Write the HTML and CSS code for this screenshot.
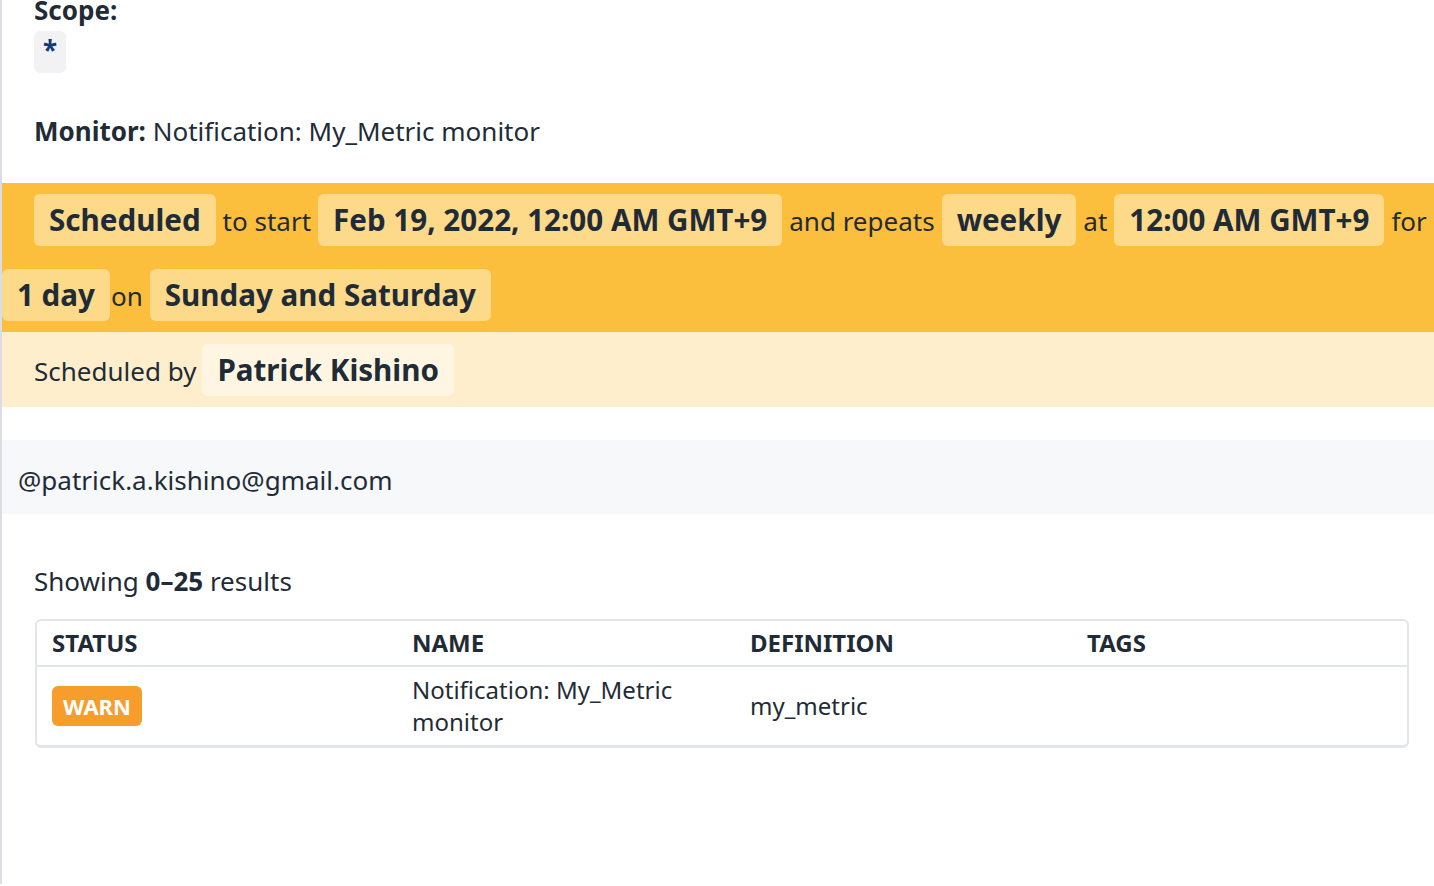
FILE: index.html
```html
<!DOCTYPE html>
<html lang="en">
<head>
    <meta charset="UTF-8">
    <title>Downtime details</title>
    <link rel="stylesheet" href="styles.css">
</head>
<body>

    <div class="page">
        <div class="details">
            <div class="field-label">Scope:</div>
            <div class="scope-chip">*</div>
            <p class="monitor"><strong>Monitor:</strong> Notification: My_Metric monitor</p>
        </div>

        <div class="schedule">
            <span class="chip first">Scheduled</span>
            <span class="word">to start</span>
            <span class="chip">Feb 19, 2022, 12:00 AM GMT+9</span>
            <span class="word">and repeats</span>
            <span class="chip">weekly</span>
            <span class="word">at</span>
            <span class="chip">12:00 AM GMT+9</span>
            <span class="word">for</span>
            <span class="chip">1 day</span>
            <span class="word tight">on</span>
            <span class="chip">Sunday and Saturday</span>
        </div>

        <div class="scheduled-by">
            <span class="word">Scheduled by</span>
            <span class="chip light">Patrick Kishino</span>
        </div>

        <div class="message">@patrick.a.kishino@gmail.com</div>

        <div class="results">Showing <strong>0–25</strong> results</div>

        <table class="monitors">
            <thead>
                <tr>
                    <th class="col-status">Status</th>
                    <th class="col-name">Name</th>
                    <th class="col-def">Definition</th>
                    <th>Tags</th>
                </tr>
            </thead>
            <tbody>
                <tr>
                    <td><span class="badge warn">WARN</span></td>
                    <td>Notification: My_Metric monitor</td>
                    <td>my_metric</td>
                    <td></td>
                </tr>
            </tbody>
        </table>
    </div>

</body>
</html>
```

FILE: styles.css
```css
body {
    font-family: "Noto Sans", "Open Sans", sans-serif;
    color: #1f2c37;
    background-color: white;
    margin: 0;
}
.page {
    border-left: 2px solid #dcdde2;
    min-height: 100vh;
    box-sizing: border-box;
}
.details {
    padding-left: 32px;
}
.field-label {
    font-size: 26px;
    font-weight: bold;
    line-height: 24px;
    margin-top: -2px;
}
.scope-chip {
    display: inline-block;
    margin-top: 9px;
    padding: 3px 9px 7px;
    background-color: #f2f2f4;
    border-radius: 6px;
    color: #163a78;
    font-size: 26px;
    font-weight: bold;
    line-height: 32px;
}
.monitor {
    font-size: 26px;
    line-height: 36px;
    margin: 40px 0 34px;
}
.schedule {
    display: flex;
    flex-wrap: wrap;
    align-items: baseline;
    column-gap: 7px;
    row-gap: 23px;
    padding: 11px 0;
    background-color: #fcbf3d;
}
.chip {
    display: inline-block;
    padding: 6px 15px;
    background-color: #fdd98a;
    border-radius: 6px;
    font-size: 29.6px;
    font-weight: bold;
    line-height: 40px;
}
.chip.first {
    margin-left: 32px;
}
.word {
    font-size: 26px;
    line-height: 40px;
}
.word.tight {
    margin-left: -6px;
}
.scheduled-by {
    display: flex;
    align-items: baseline;
    column-gap: 6px;
    padding: 12px 32px 11px;
    background-color: #feeecb;
}
.chip.light {
    background-color: #fef6e3;
}
.message {
    margin-top: 33px;
    padding: 20px 16px 14px;
    background-color: #f7f8fa;
    font-size: 26px;
    line-height: 40px;
}
.results {
    font-size: 26px;
    line-height: 36px;
    margin: 49px 0 0 32px;
}
.monitors {
    width: calc(100% - 58px);
    margin: 20px 0 0 33px;
    border: 2px solid #e3e5ec;
    border-bottom-width: 3px;
    border-radius: 6px;
    border-spacing: 0;
    table-layout: fixed;
    font-size: 24px;
}
.monitors th {
    text-align: left;
    text-transform: uppercase;
    font-weight: bold;
    line-height: 32px;
    padding: 6px 15px;
    border-bottom: 2px solid #e3e5ec;
}
.monitors td {
    line-height: 32px;
    padding: 7px 15px;
    vertical-align: middle;
}
.col-status {
    width: 330px;
}
.col-name {
    width: 308px;
}
.col-def {
    width: 307px;
}
.badge {
    display: inline-block;
    padding: 2px 11px;
    border-radius: 6px;
    color: white;
    font-size: 22px;
    font-weight: bold;
    line-height: 36px;
}
.badge.warn {
    background-color: #f69d2b;
}
```
